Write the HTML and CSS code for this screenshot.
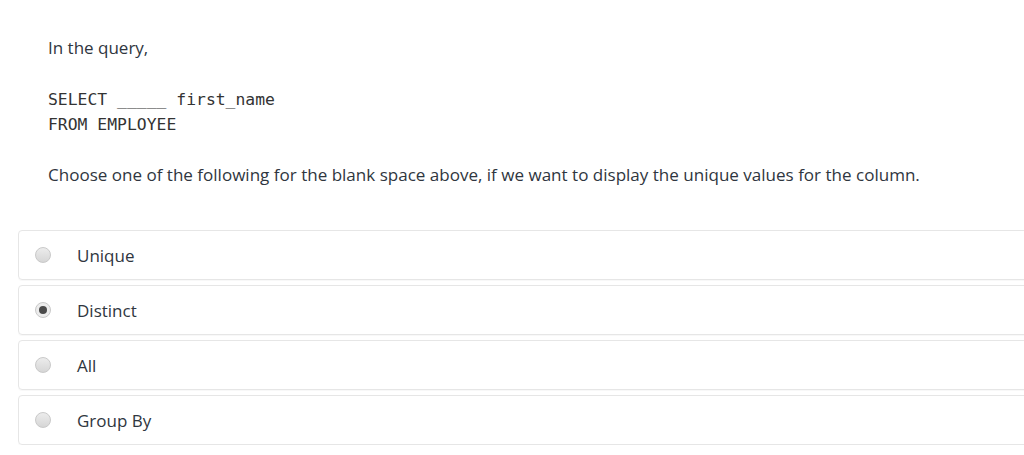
FILE: index.html
```html
<!DOCTYPE html>
<html>
<head>
<meta charset="utf-8">
<link rel="stylesheet" href="styles.css">
</head>
<body>
<div class="question">
  <p class="intro">In the query,</p>
  <pre class="code">SELECT _____ first_name
FROM EMPLOYEE</pre>
  <p class="prompt">Choose one of the following for the blank space above, if we want to display the unique values for the column.</p>
</div>
<ul class="options">
  <li class="option"><span class="radio"></span><span class="label">Unique</span></li>
  <li class="option"><span class="radio checked"></span><span class="label">Distinct</span></li>
  <li class="option"><span class="radio"></span><span class="label">All</span></li>
  <li class="option"><span class="radio"></span><span class="label">Group By</span></li>
</ul>
</body>
</html>
```
FILE: styles.css
```css
html, body {
  margin: 0;
  padding: 0;
  background: #fff;
  overflow: hidden;
}
body {
  font-family: "Open Sans", Lato, sans-serif;
  color: #2f3640;
}
.question {
  padding: 36px 0 0 48px;
}
.intro {
  margin: 0;
  font-size: 17px;
  line-height: 24px;
}
.code {
  margin: 27px 0 0 0;
  font-family: "DejaVu Sans Mono", monospace;
  font-size: 16.4px;
  line-height: 25px;
  color: #333;
}
.prompt {
  margin: 26px 0 0 0;
  font-size: 17.05px;
  line-height: 24px;
}
.options {
  list-style: none;
  margin: 43px 0 0 18px;
  padding: 0;
  width: 1100px;
  display: flex;
  flex-direction: column;
  gap: 5px;
}
.option {
  height: 48px;
  border: 1px solid #e6e6e6;
  border-radius: 4px;
  box-shadow: 0 1px 1px rgba(0,0,0,0.03);
  display: flex;
  align-items: center;
  padding-left: 16px;
}
.radio {
  width: 14px;
  height: 14px;
  border-radius: 50%;
  border: 1px solid #c9c9c9;
  background: linear-gradient(#ececec, #d6d6d6);
  position: relative;
  flex: none;
}
.radio.checked {
  background: #ececec;
}
.radio.checked::after {
  content: "";
  position: absolute;
  left: 3px;
  top: 3px;
  width: 8px;
  height: 8px;
  border-radius: 50%;
  background: #4a4a4a;
}
.label {
  margin-left: 26px;
  font-size: 17px;
  color: #2f3640;
}
```
